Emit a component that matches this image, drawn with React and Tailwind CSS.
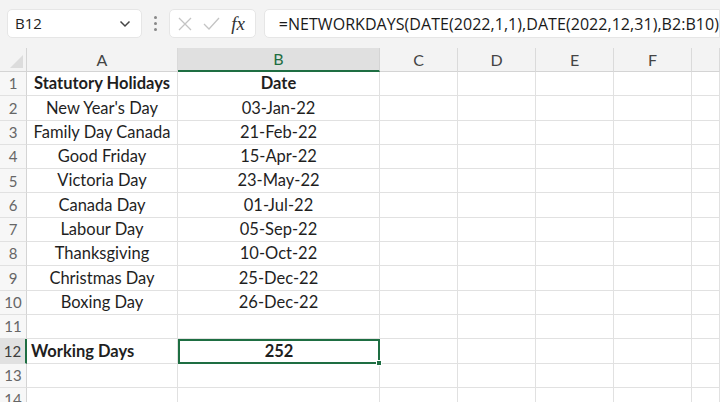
import React from "react";

const rows = [
  ["Statutory Holidays", "Date", true],
  ["New Year's Day", "03-Jan-22"],
  ["Family Day Canada", "21-Feb-22"],
  ["Good Friday", "15-Apr-22"],
  ["Victoria Day", "23-May-22"],
  ["Canada Day", "01-Jul-22"],
  ["Labour Day", "05-Sep-22"],
  ["Thanksgiving", "10-Oct-22"],
  ["Christmas Day", "25-Dec-22"],
  ["Boxing Day", "26-Dec-22"],
];

const cols = ["A", "B", "C", "D", "E", "F", ""];
const cellFont = { fontFamily: "Lato, 'Open Sans', sans-serif" };

function Cell({ children, className = "" }) {
  return (
    <div className={"h-[24.3px] border-r border-b border-[#e1e1e1] flex items-center text-[16.5px] text-[#1f1f1f] " + className}>
      {children}
    </div>
  );
}

function RowHead({ n, active }) {
  return (
    <div
      className={
        "h-[24.3px] border-b border-[#e1e1e1] flex items-center justify-center text-[15px] " +
        (active
          ? "bg-[#e1e1e1] text-[#3d3d3d] border-r-2 border-r-[#1e6e42]"
          : "bg-[#f7f7f7] text-[#666] border-r border-r-[#d4d4d4]")
      }
    >
      {n}
    </div>
  );
}

export default function App() {
  return (
    <div className="w-[720px] h-[402px] overflow-hidden bg-white" style={{ fontFamily: "'Open Sans', sans-serif" }}>
      {/* formula bar */}
      <div className="h-[48px] bg-[#f3f3f3] flex items-start pt-[9px] pl-[7px]">
        <div className="w-[136px] h-[29px] bg-white rounded-[5px] border border-[#e6e6e6] flex items-center justify-between pl-[7px] pr-[10px]">
          <span className="text-[15px] text-[#222]">B12</span>
          <svg width="12" height="8" viewBox="0 0 12 8" fill="none" stroke="#444" strokeWidth="1.5">
            <path d="M1.5 1.5 L6 6 L10.5 1.5" />
          </svg>
        </div>
        <div className="w-[27px] h-[29px] flex flex-col items-center justify-center gap-[3px]">
          <span className="w-[3px] h-[3px] rounded-full bg-[#888]" />
          <span className="w-[3px] h-[3px] rounded-full bg-[#888]" />
          <span className="w-[3px] h-[3px] rounded-full bg-[#888]" />
        </div>
        <div className="w-[87px] h-[29px] bg-white rounded-[5px] border border-[#e6e6e6] flex items-center pl-[8px] gap-[11px]">
          <svg width="14" height="14" viewBox="0 0 14 14" stroke="#c4c4c4" strokeWidth="1.3">
            <path d="M1 1 L13 13 M13 1 L1 13" />
          </svg>
          <svg width="17" height="13" viewBox="0 0 17 13" fill="none" stroke="#c4c4c4" strokeWidth="1.3">
            <path d="M1 7 L6 12 L16 1" />
          </svg>
          <span className="italic text-[19px] text-[#333] leading-none" style={{ fontFamily: "'Liberation Serif', serif" }}>
            fx
          </span>
        </div>
        <div className="ml-[8px] flex-1 h-[29px] bg-white rounded-l-[5px] border border-[#e6e6e6] flex items-center pl-[14px]">
          <span className="text-[16px] text-[#1a1a1a] whitespace-nowrap tracking-[0.05px]">
            =NETWORKDAYS(DATE(2022,1,1),DATE(2022,12,31),B2:B10)
          </span>
        </div>
      </div>

      {/* sheet */}
      <div className="grid grid-cols-[27px_151px_202px_78px_78px_78px_78px_1fr]" style={cellFont}>
        <div className="h-[24px] bg-[#f3f3f3] border-r border-b border-[#d4d4d4] relative">
          <div className="absolute right-[3px] bottom-[3px] w-0 h-0 border-l-[13px] border-l-transparent border-b-[13px] border-b-[#dcdcdc]" />
        </div>
        {cols.map((c) => (
          <div
            key={c || "g"}
            className={
              "h-[24px] flex items-center justify-center text-[16px] " +
              (c === "B"
                ? "bg-[#e0e0e0] text-[#1e6e42] border-b-2 border-b-[#1e6e42] border-r border-r-[#d4d4d4]"
                : "bg-[#f3f3f3] text-[#444] border-b border-b-[#d4d4d4] border-r border-r-[#dadada]")
            }
          >
            {c}
          </div>
        ))}

        {rows.map(([a, b, bold], i) => (
          <React.Fragment key={i}>
            <RowHead n={i + 1} />
            <Cell className={"justify-center " + (bold ? "font-bold" : "")}>{a}</Cell>
            <Cell className={"justify-center " + (bold ? "font-bold" : "")}>{b}</Cell>
            <Cell />
            <Cell />
            <Cell />
            <Cell />
            <Cell />
          </React.Fragment>
        ))}

        <RowHead n={11} />
        <Cell /><Cell /><Cell /><Cell /><Cell /><Cell /><Cell />

        <RowHead n={12} active />
        <Cell className="font-bold pl-[4px]">Working Days</Cell>
        <div className="h-[24.3px] border-2 border-[#1e6e42] flex items-center justify-center text-[16.5px] font-bold text-[#1f1f1f] relative">
          252
          <span className="absolute -right-[4px] -bottom-[4px] w-[6px] h-[6px] bg-[#1e6e42] border border-white" />
        </div>
        <Cell /><Cell /><Cell /><Cell /><Cell />

        <RowHead n={13} />
        <Cell /><Cell /><Cell /><Cell /><Cell /><Cell /><Cell />
        <RowHead n={14} />
        <Cell /><Cell /><Cell /><Cell /><Cell /><Cell /><Cell />
      </div>
    </div>
  );
}
